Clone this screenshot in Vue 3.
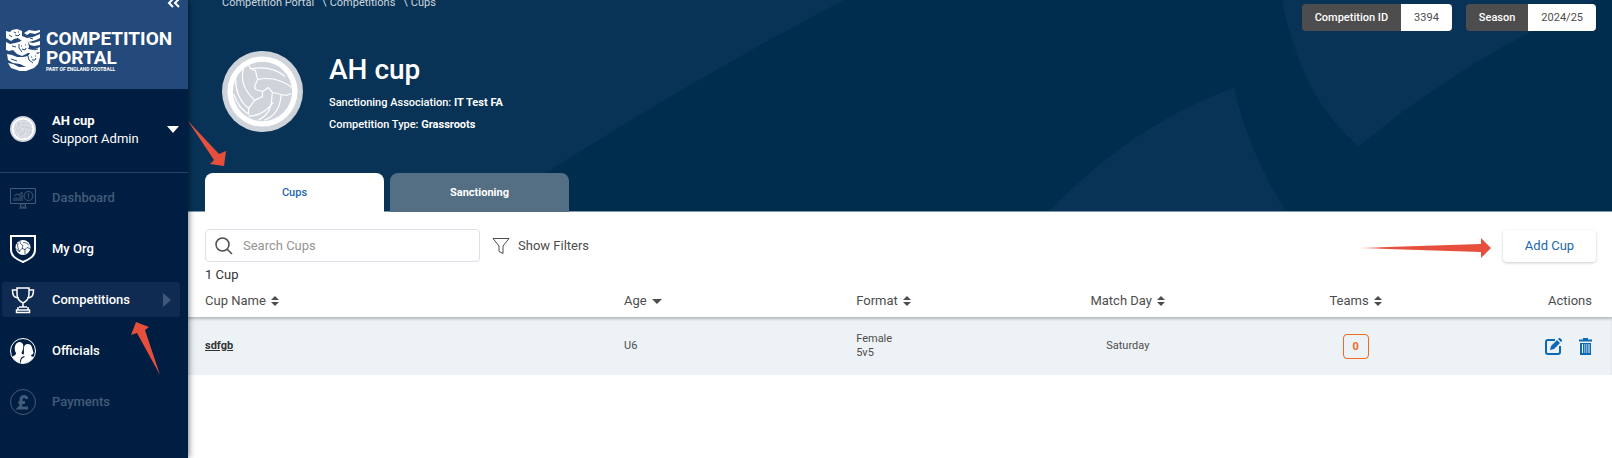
<template>
  <div class="page">
    <aside class="sidebar">
      <div class="brand">
        <button class="collapse" type="button" aria-label="Collapse menu">
          <svg width="14" height="10" viewBox="0 0 14 10">
            <path d="M6 1 2 5l4 4M12 1 8 5l4 4" />
          </svg>
        </button>
        <div class="logo">
          <svg class="crest" width="35" height="42" viewBox="0 0 35 42">
            <!-- three lions, top to bottom -->
            <path
              class="solid"
              d="M0 2l4 1 2-2 5-1 5 2 0 5 5 2 6-1 7-3v4l-4 2-7 2-7-1-4-3-4 1-3 2-5-3zM18 4l5-3 6 1 5-1v2l-5 2-5-1-3 2z"
            />
            <path
              class="solid"
              d="M0 13l4 2 5-1 4-1 4-2 5 2 1 5-1 2 5 1 7-3v5l-5 1-7 0-6 3-5-2-4-4-4 1-3-1-3-1zM22 13l5 1 7-2v4l-6 1-4-1z"
            />
            <path
              class="solid"
              d="M1 25l5 1 5 2 6 0 5-1 2-3 4-1 4 2 2-2 0 5-2 7-4 4-8 3-4 1-5-2-6-2-3-5 5 1 6 3 7 0-6-3-7-1-5-3z"
            />
            <path
              class="cut"
              d="M8 3l2 1M12 3h1M9 6l3 1 2-2M15 17h1M19 16h1M16 20l3 1 1-2M25 28h1M29 27h1M26 31l3 0 1-2M13 15l0 4 3 4M22 27l1 4 4 3M6 17l4 1M5 30l6 2M28 21l4-1M3 6l3 2M24 9l3 1"
            />
          </svg>
          <div class="logo-text">
            <span>COMPETITION</span>
            <span>PORTAL</span>
            <small>PART OF ENGLAND FOOTBALL</small>
          </div>
        </div>
      </div>

      <button class="account" type="button">
        <svg class="icon" width="26" height="26" viewBox="0 0 82 82">
          <use href="#ball-badge" />
        </svg>
        <span class="account-text">
          <strong>AH cup</strong>
          <span>Support Admin</span>
        </span>
        <svg class="caret" width="12" height="8" viewBox="0 0 12 8">
          <path d="M0 1h12L6 8z" />
        </svg>
      </button>

      <nav class="menu">
        <a
          v-for="item in menu"
          :key="item.name"
          href="#"
          :class="{ active: item.active, disabled: item.disabled }"
        >
          <svg class="icon line" width="26" height="28" viewBox="0 0 26 28">
            <g v-if="item.icon === 'dashboard'">
              <path d="M0.500 4.500h25v15h-25zM10.500 20h5v3h-5zM9 24h8" />
              <path d="M4 17v-3M6 17v-4M8 17v-3M10 17v-6M12 17V9M4 12l3-2 2 1 3-3" />
              <circle cx="18.500" cy="12" r="4.500" />
              <path d="M18.500 9.500v3M18.500 13.500v1" />
            </g>
            <g v-else-if="item.icon === 'org'">
              <path class="thick" d="M1 1h24V15c0 6-5 9-12 12C6 24 1 21 1 15z" />
              <circle class="solid" cx="13" cy="12.500" r="7.500" />
              <path
                class="seam"
                d="M10 5.500c0 3 1 4 3 5l-1 3 3 1 2-2 3 1M12 13.500l-3 3-3-3M15 14l0 5M8 8c-1 3 0 6 2 9M13 7.500c3 0 5 1 6 3"
              />
            </g>
            <g v-else-if="item.icon === 'cup'">
              <path
                class="trophy"
                d="M7 2h12v6c0 4-2 7-6 9-4-2-6-5-6-9zM7 4H2.500c0 5 1 8 6.500 8M19 4h4.500c0 5-1 8-6.500 8M13 17v4M9 21h8M8 21v3M18 21v3M6.500 24h13v2.500h-13z"
              />
            </g>
            <g v-else-if="item.icon === 'people'">
              <circle cx="13" cy="14" r="12.500" />
              <path
                class="solid"
                d="M2 20c3-2 4-2 4-4-2-3-2-10 3-11 4 0 5 3 4 7-1 3-2 4-1 5 1 0 2 1 2 2-3 1-4 3-4 7-3-1-6-3-8-6zM11 26c0-4 1-5 4-6-2-1-2-2-1-4 0-4-1-9 4-9 4 0 4 4 5 7 1 3 0 3-2 4 0 1 1 2 3 2-3 4-8 7-13 6z"
              />
            </g>
            <g v-else>
              <circle cx="13" cy="14" r="12.500" />
              <path
                class="pound"
                d="M17 11c-1-4-6-3-6 1v4c0 2-1 3-2 4h9M8.500 14.500H15"
              />
            </g>
          </svg>
          <span>{{ item.name }}</span>
          <svg
            v-if="item.active"
            class="next"
            width="8"
            height="14"
            viewBox="0 0 8 14"
          >
            <path d="M0 0l8 7-8 7z" />
          </svg>
        </a>
      </nav>
    </aside>

    <main class="main">
      <header class="hero">
        <svg class="hero-bg" viewBox="0 0 1424 212" preserveAspectRatio="none">
          <path d="M0 0H656Q470 98 300 212H0z" />
          <path d="M861 212Q945 125 1046 88Q1060 152 1098 212z" />
          <path d="M1094 0Q1113 99 1171 147Q1274 60 1408 0z" />
        </svg>

        <div class="hero-top">
          <nav class="crumbs">
            <a href="#">Competition Portal</a><i>\</i>
            <a href="#">Competitions</a><i>\</i>
            <a href="#">Cups</a>
          </nav>
          <dl class="tags">
            <div>
              <dt>Competition ID</dt>
              <dd>3394</dd>
            </div>
            <div>
              <dt>Season</dt>
              <dd>2024/25</dd>
            </div>
          </dl>
        </div>

        <div class="profile">
          <svg width="81" height="81" viewBox="0 0 82 82">
            <g id="ball-badge">
              <circle cx="41" cy="41" r="41" fill="#cfd4db" />
              <circle cx="41" cy="41" r="35.500" fill="#fff" />
              <circle cx="41" cy="41" r="30" fill="#cfd4db" />
              <path
                fill="none"
                stroke="#fff"
                stroke-width="1.200"
                stroke-linejoin="round"
                d="M27 14l2 4 5 2 2 9-3 7 1 3 7 2 6-4 4 5-1 10c-1 8-5 14-13 18M29 18c12-2 25-1 35 8M36 29c12-3 24 0 35 8M22 16c-4 14 1 24 11 34l8-4v-5M33 50l-6 8v6M14 27c-1 14 5 25 13 31M12 44c3 9 8 16 15 20M52 42l8 2 5 1 5-2M60 44c-1 12-6 22-17 26M27 66c9 0 18-5 25-14"
              />
            </g>
          </svg>
          <div class="profile-text">
            <h1>AH cup</h1>
            <p>Sanctioning Association: <b>IT Test FA</b></p>
            <p>Competition Type: <b>Grassroots</b></p>
          </div>
        </div>

        <div class="tabs" role="tablist">
          <button
            v-for="name in tabs"
            :key="name"
            type="button"
            role="tab"
            :class="{ current: tab === name }"
            @click="tab = name"
          >
            {{ name }}
          </button>
        </div>
      </header>

      <section class="toolbar">
        <label class="search">
          <svg width="18" height="18" viewBox="0 0 18 18">
            <circle cx="7.500" cy="7.500" r="6.500" />
            <path d="M12 12l5 5" />
          </svg>
          <input
            v-model="query"
            type="text"
            placeholder="Search Cups"
            aria-label="Search Cups"
          />
        </label>
        <button class="filters" type="button">
          <svg width="18" height="18" viewBox="0 0 18 18">
            <path d="M1 1.500h16L11 9v7.500l-4-2V9z" />
          </svg>
          Show Filters
        </button>
        <button class="add" type="button">Add Cup</button>
      </section>

      <p class="count">1 Cup</p>

      <table class="cups">
        <thead>
          <tr>
            <th v-for="col in columns" :key="col.name" :class="col.cls">
              {{ col.name }}
              <svg
                v-if="col.sort === 'both'"
                width="8"
                height="12"
                viewBox="0 0 8 12"
              >
                <path d="M0 5l4-4 4 4zM0 7h8l-4 4z" />
              </svg>
              <svg
                v-else-if="col.sort === 'down'"
                width="10"
                height="12"
                viewBox="0 0 10 12"
              >
                <path d="M0 4h10L5 9z" />
              </svg>
            </th>
          </tr>
        </thead>
        <tbody>
          <tr v-for="cup in cups" :key="cup.name">
            <td class="name"><a href="#">{{ cup.name }}</a></td>
            <td>{{ cup.age }}</td>
            <td>{{ cup.gender }}<br />{{ cup.size }}</td>
            <td class="center">{{ cup.day }}</td>
            <td class="center">
              <span class="teams">{{ cup.teams }}</span>
            </td>
            <td class="actions">
              <button type="button" aria-label="Edit">
                <svg width="17" height="17" viewBox="0 0 17 17">
                  <path
                    class="stroke"
                    d="M10 2H3Q1 2 1 4v10q0 2 2 2h10q2 0 2-2V8"
                  />
                  <path d="M5 12l1-4 6-6 3 3-6 6zM13 1l1-1h1l2 2v1l-1 1z" />
                </svg>
              </button>
              <button type="button" aria-label="Delete">
                <svg width="13" height="17" viewBox="0 0 13 17">
                  <path
                    d="M0 1.500h4V0h5v1.500h4V3.500H0zM1 5h11v12H1zM3 6v9h1V6zM5.500 6v9h0.700V6zM7.500 6v9h0.700V6zM9.500 6v9h1V6z"
                    fill-rule="evenodd"
                  />
                </svg>
              </button>
            </td>
          </tr>
        </tbody>
      </table>

      <svg class="pointer to-add" width="134" height="20" viewBox="0 0 134 20">
        <defs>
          <linearGradient id="fade">
            <stop offset="0" stop-color="#e64f3c" stop-opacity="0.200" />
            <stop offset="0.200" stop-color="#e64f3c" />
          </linearGradient>
        </defs>
        <path fill="url(#fade)" d="M0 10l124-4V0l10 10-10 10v-6z" />
      </svg>
    </main>

    <svg class="pointer to-tab" width="38" height="45" viewBox="0 0 38 45">
      <path d="M0 0l31 33 7-3-2 15-14-2 4-4z" />
    </svg>
    <svg class="pointer to-menu" width="30" height="53" viewBox="0 0 30 53">
      <path d="M29 53L6 11l-6 2L5 0l13 5-4 3z" />
    </svg>
  </div>
</template>

<script setup>
import { ref } from "vue";

const query = ref("");
const tab = ref("Cups");
const tabs = ["Cups", "Sanctioning"];

const menu = [
  { name: "Dashboard", icon: "dashboard", disabled: true },
  { name: "My Org", icon: "org" },
  { name: "Competitions", icon: "cup", active: true },
  { name: "Officials", icon: "people" },
  { name: "Payments", icon: "pound", disabled: true },
];

const columns = [
  { name: "Cup Name", sort: "both", cls: "name" },
  { name: "Age", sort: "down", cls: "age" },
  { name: "Format", sort: "both", cls: "format" },
  { name: "Match Day", sort: "both", cls: "day center" },
  { name: "Teams", sort: "both", cls: "count-col center" },
  { name: "Actions", cls: "actions" },
];

const cups = [
  {
    name: "sdfgb",
    age: "U6",
    gender: "Female",
    size: "5v5",
    day: "Saturday",
    teams: 0,
  },
];
</script>

<style>
body {
  margin: 0;
}
</style>

<style scoped>
* {
  box-sizing: border-box;
}

.page {
  position: relative;
  display: flex;
  min-height: 100vh;
  overflow: hidden;
  background: #fff;
  color: #4d4d4d;
  font-family: Roboto, "Liberation Sans", sans-serif;
  font-size: 13px;
  line-height: 20px;
}

button {
  padding: 0;
  border: 0;
  background: none;
  color: inherit;
  font: inherit;
  cursor: pointer;
}

svg {
  flex: none;
}

/* Sidebar */
.sidebar {
  z-index: 1;
  flex: none;
  width: 188px;
  background: #001e41;
  box-shadow: 1px 0 6px rgba(0, 0, 0, 0.5);
  color: #fff;
}

.brand {
  display: flex;
  flex-direction: column;
  height: 89px;
  background: #244a7b;
}

.collapse {
  display: flex;
  align-self: flex-end;
  margin-right: 7px;
  margin-top: -2px;

  path {
    fill: none;
    stroke: #fff;
    stroke-width: 2;
  }
}

.logo {
  display: flex;
  gap: 5px;
  padding: 21px 0 0 6px;
}

.crest {
  .solid {
    fill: #fff;
  }

  .cut {
    fill: none;
    stroke: #244a7b;
    stroke-width: 1;
  }
}

.logo-text {
  display: flex;
  flex-direction: column;
  font-size: 19px;
  font-weight: 700;
  line-height: 19px;

  small {
    font-size: 5px;
    line-height: 5px;
  }
}

.account {
  display: flex;
  align-items: center;
  width: 100%;
  height: 84px;
  padding: 0 9px 3px 10px;
  border-bottom: 1px solid #2a4262;
  text-align: left;
}

.account-text {
  display: flex;
  flex: 1;
  flex-direction: column;
  margin-left: 16px;
  padding-top: 2px;
  line-height: 18px;
}

.caret {
  fill: #fff;
}

.menu {
  display: flex;
  flex-direction: column;
  gap: 16px;
  padding: 7px 8px 0 2px;

  a {
    display: flex;
    align-items: center;
    height: 35px;
    padding: 0 9px 0 8px;
    border-radius: 3px;
    color: #fff;
    font-weight: 500;
    text-decoration: none;
  }

  span {
    flex: 1;
    margin-left: 16px;
  }

  .active {
    background: #0f2b52;
  }

  .disabled {
    color: #425b78;
  }
}

.line {
  fill: none;
  stroke: currentColor;
  stroke-width: 1;

  .thick {
    stroke-width: 2;
  }

  .trophy {
    stroke-width: 1.5;
  }

  .solid {
    fill: currentColor;
    stroke: none;
  }

  .seam {
    stroke: #001e41;
    stroke-width: 0.7;
  }

  .pound {
    stroke-width: 3;
  }
}

.next {
  fill: #3f587a;
}

/* Hero */
.main {
  position: relative;
  flex: 1;
  min-width: 0;
}

.hero {
  position: relative;
  display: flex;
  flex-direction: column;
  height: 212px;
  border-bottom: 1px solid #8396a6;
  background: #002d4d;
  color: #fff;
}

.hero-bg {
  position: absolute;
  inset: 0;
  width: 100%;
  height: 100%;
  fill: #083356;
}

.hero-top,
.profile,
.tabs {
  position: relative;
  display: flex;
}

.hero-top {
  justify-content: space-between;
  align-items: flex-start;
  height: 51px;
  padding: 4px 16px 0 34px;
  font-size: 11px;
}

.crumbs {
  margin-top: -11px;

  a {
    color: #ccd5dd;
    text-decoration: none;
  }

  i {
    padding: 0 3px 0 8px;
    color: #ccd5dd;
    font-style: normal;
  }
}

.tags {
  display: flex;
  gap: 14px;
  margin: 0;
  line-height: 27px;

  div {
    display: flex;
    overflow: hidden;
    border-radius: 4px;
  }

  dt {
    padding: 0 13px;
    background: #4d4d4d;
    font-weight: 500;
  }

  dd {
    margin: 0;
    padding: 0 13px;
    background: #fff;
    color: #4d4d4d;
  }
}

.profile {
  gap: 26px;
  padding-left: 34px;
}

.profile-text {
  h1 {
    margin: 0 0 4px;
    font-size: 28px;
    font-weight: 500;
    line-height: 38px;
  }

  p {
    margin: 0 0 2px;
    font-size: 11px;
    font-weight: 500;
  }
}

.tabs {
  gap: 6px;
  margin-top: auto;
  margin-bottom: -1px;
  padding-left: 17px;

  button {
    width: 179px;
    height: 39px;
    border-radius: 8px 8px 0 0;
    background: #546f84;
    font-size: 11px;
    font-weight: 700;
  }

  .current {
    background: #fff;
    color: #2068b0;
    font-weight: 500;
  }
}

/* Toolbar */
.toolbar {
  display: flex;
  align-items: center;
  padding: 17px 16px 0 17px;
}

.search {
  display: flex;
  align-items: center;
  gap: 10px;
  width: 275px;
  height: 33px;
  padding: 0 9px;
  border: 1px solid #dde0e8;
  border-radius: 4px;

  svg {
    fill: none;
    stroke: #4d4d4d;
    stroke-width: 1.5;
  }

  input {
    flex: 1;
    min-width: 0;
    padding: 0;
    border: 0;
    outline: 0;
    color: #4d4d4d;
    font: inherit;
  }

  input::placeholder {
    color: #949494;
  }
}

.filters {
  display: flex;
  align-items: center;
  gap: 8px;
  margin-left: 12px;

  svg {
    fill: none;
    stroke: #4d4d4d;
  }
}

.add {
  width: 93px;
  height: 32px;
  margin-left: auto;
  border-radius: 4px;
  background: #fff;
  box-shadow: 0 1px 3px rgba(0, 0, 0, 0.2);
  color: #2068b0;
}

.count {
  margin: 3px 0 0;
  padding-left: 17px;
  color: #333;
}

/* Table */
.cups {
  width: 100%;
  border-collapse: collapse;
  table-layout: fixed;

  th,
  td {
    padding: 0 0 0 16px;
    text-align: left;
  }

  th {
    height: 32px;
    font-weight: 400;
    color: #4d4d4d;

    svg {
      margin-left: 2px;
      fill: #4d4d4d;
      vertical-align: -2px;
    }
  }

  td {
    height: 58px;
    font-size: 11px;
    line-height: 14px;
  }

  tbody tr {
    background: #edf2f6;
    box-shadow: inset 0 3px 3px -1px #b4b9bd;
  }

  .name {
    width: 29.5%;
    padding-left: 17px;
  }

  .name a {
    color: #333;
    font-weight: 700;
  }

  .age {
    width: 16.3%;
  }

  .format {
    width: 12.2%;
  }

  .day,
  .count-col {
    width: 16%;
  }

  .center {
    padding: 0;
    text-align: center;
  }

  .actions {
    padding: 0 20px 0 0;
    text-align: right;
  }

  .actions button {
    margin-left: 17px;
    vertical-align: middle;
  }

  .actions svg {
    display: block;
    fill: #0b69b7;
  }

  .actions .stroke {
    fill: none;
    stroke: #0b69b7;
    stroke-width: 2;
  }
}

.teams {
  display: inline-block;
  width: 26px;
  border: 1px solid #f26a1b;
  border-radius: 4px;
  color: #f26a1b;
  font-weight: 700;
  line-height: 23px;
}

/* Red pointers lying over the page */
.pointer {
  position: absolute;
  z-index: 2;
  fill: #e64f3c;
}

.to-add {
  top: 238px;
  right: 121px;
}

.to-tab {
  top: 121px;
  left: 188px;
}

.to-menu {
  top: 322px;
  left: 131px;
}
</style>
